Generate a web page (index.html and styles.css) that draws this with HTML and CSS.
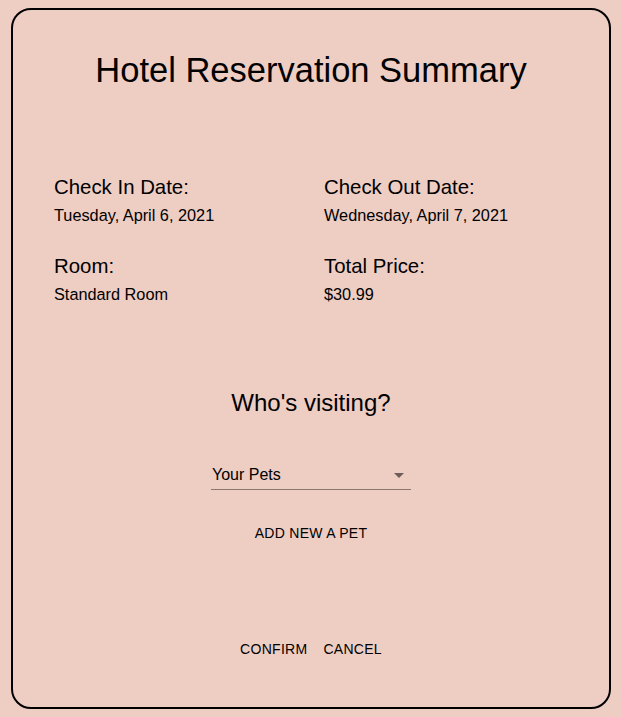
FILE: index.html
```html
<!DOCTYPE html>
<html>
<head>
<meta charset="utf-8">
<link rel="stylesheet" href="styles.css">
</head>
<body>
<div class="card">
  <h1 class="title">Hotel Reservation Summary</h1>
  <div class="details">
    <div class="item">
      <div class="label">Check In Date:</div>
      <div class="value">Tuesday, April 6, 2021</div>
    </div>
    <div class="item">
      <div class="label">Check Out Date:</div>
      <div class="value">Wednesday, April 7, 2021</div>
    </div>
    <div class="item">
      <div class="label">Room:</div>
      <div class="value">Standard Room</div>
    </div>
    <div class="item">
      <div class="label">Total Price:</div>
      <div class="value">$30.99</div>
    </div>
  </div>
  <h2 class="visiting">Who's visiting?</h2>
  <div class="select">
    <span class="select-text">Your Pets</span>
    <svg class="arrow" width="24" height="24" viewBox="0 0 24 24"><path d="M7 10l5 5 5-5z" fill="rgba(0,0,0,0.54)"/></svg>
  </div>
  <button class="btn add">Add new a pet</button>
  <div class="actions">
    <button class="btn">Confirm</button>
    <button class="btn">Cancel</button>
  </div>
</div>
</body>
</html>
```

FILE: styles.css
```css
html, body {
  background: #eecdc3;
}
body {
  margin: 8px;
  font-family: "Liberation Sans", Arial, sans-serif;
  color: #000;
}
.card {
  width: 596px;
  height: 697px;
  margin: 0 auto;
  border: 2px solid #000;
  border-radius: 20px;
  display: flex;
  flex-direction: column;
  align-items: center;
  box-sizing: content-box;
}
.title {
  margin: 40px 0 0;
  font-size: 34.5px;
  font-weight: normal;
  line-height: 40px;
}
.details {
  align-self: stretch;
  margin: 85px 41px 0;
  display: grid;
  grid-template-columns: 270px 1fr;
  row-gap: 29px;
}
.label {
  font-size: 20.4px;
  line-height: 24px;
}
.value {
  font-size: 16.3px;
  line-height: 20px;
  margin-top: 6px;
}
.visiting {
  margin: 85px 0 0;
  font-size: 24px;
  font-weight: normal;
  line-height: 28px;
}
.select {
  margin-top: 43px;
  width: 200px;
  height: 30px;
  border-bottom: 1px solid rgba(0,0,0,0.42);
  display: flex;
  align-items: center;
  justify-content: space-between;
  box-sizing: border-box;
}
.select-text {
  font-size: 16px;
  padding-left: 1px;
}
.btn {
  background: none;
  border: none;
  font-family: "Liberation Sans", Arial, sans-serif;
  font-size: 14px;
  text-transform: uppercase;
  color: #000;
  padding: 6px 8px;
  letter-spacing: 0.02em;
}
.add {
  margin-top: 29px;
}
.actions {
  margin-top: 88px;
  display: flex;
}
```
